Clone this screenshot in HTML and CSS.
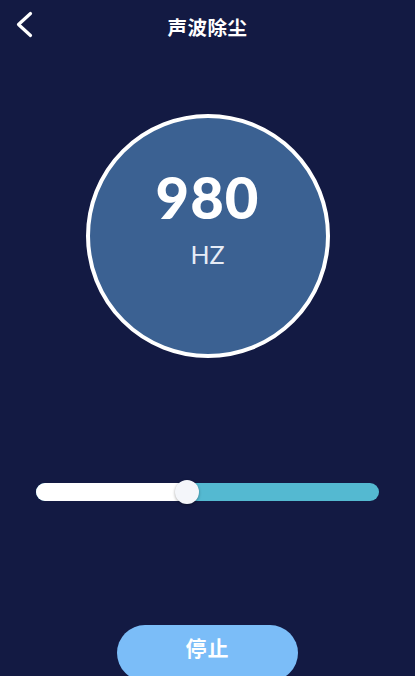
FILE: index.html
```html
<!DOCTYPE html>
<html lang="zh-CN">
<head>
  <meta charset="UTF-8">
  <meta name="viewport" content="width=device-width, initial-scale=1.0">
  <title>声波除尘</title>
  <link rel="stylesheet" href="styles.css">
</head>
<body>
  <div class="header">
    <a href="#" class="back">
      <svg width="20" height="28" viewBox="0 0 20 28">
        <path d="M15.5 2.5 L3.5 13.5 L15.5 24.5" fill="none" stroke="#ffffff" stroke-width="3.2" stroke-linecap="round" stroke-linejoin="round"/>
      </svg>
    </a>
    <h1>声波除尘</h1>
  </div>

  <!-- Frequency display -->
  <div class="dial">
    <div class="value">980</div>
    <div class="unit">HZ</div>
  </div>

  <!-- Frequency slider -->
  <div class="slider">
    <div class="track">
      <div class="fill" style="width: 44%;"></div>
      <div class="thumb" style="left: 44%;"></div>
    </div>
  </div>

  <div class="actions">
    <button class="stop-button">停止</button>
  </div>
</body>
</html>
```

FILE: styles.css
```css
body {
  margin: 0;
  height: 676px;
  overflow: hidden;
  background-color: #131a43;
  color: #ffffff;
  font-family: "Noto Sans CJK SC", "Lato", sans-serif;
}

.header {
  position: relative;
  height: 52px;
  display: flex;
  align-items: center;
  justify-content: center;
}

.back {
  position: absolute;
  left: 15px;
  top: 11px;
  display: block;
}

.header h1 {
  margin: 0;
  font-size: 19.5px;
  font-weight: bold;
  letter-spacing: 0.5px;
}

.dial {
  width: 236px;
  height: 236px;
  margin: 62px auto 0;
  border: 4px solid #ffffff;
  border-radius: 50%;
  background: #3b6192;
  display: flex;
  flex-direction: column;
  align-items: center;
}

.value {
  margin-top: 49px;
  font-family: "Lato", sans-serif;
  font-weight: 900;
  font-size: 58px;
  line-height: 60px;
  letter-spacing: 1px;
}

.unit {
  margin-top: 13px;
  font-family: "Lato", sans-serif;
  font-size: 25px;
  line-height: 28px;
  color: #e6ecf6;
}

.slider {
  padding: 0 36px;
  margin-top: 125px;
}

.track {
  position: relative;
  height: 18px;
  border-radius: 9px;
  background: #54b9d1;
}

.fill {
  height: 100%;
  border-radius: 9px;
  background: #ffffff;
}

.thumb {
  position: absolute;
  top: -3px;
  width: 24px;
  height: 24px;
  margin-left: -12px;
  border-radius: 50%;
  background: #f4f6fa;
  box-shadow: 0 1px 3px rgba(0, 0, 0, 0.35);
}

.actions {
  display: flex;
  justify-content: center;
  margin-top: 124px;
}

.stop-button {
  width: 181px;
  height: 56px;
  border: none;
  border-radius: 28px;
  background: #7bbdf8;
  color: #ffffff;
  font-family: "Noto Sans CJK SC", sans-serif;
  font-size: 21px;
  font-weight: bold;
  padding: 0 0 12px;
  letter-spacing: 1px;
}
```
